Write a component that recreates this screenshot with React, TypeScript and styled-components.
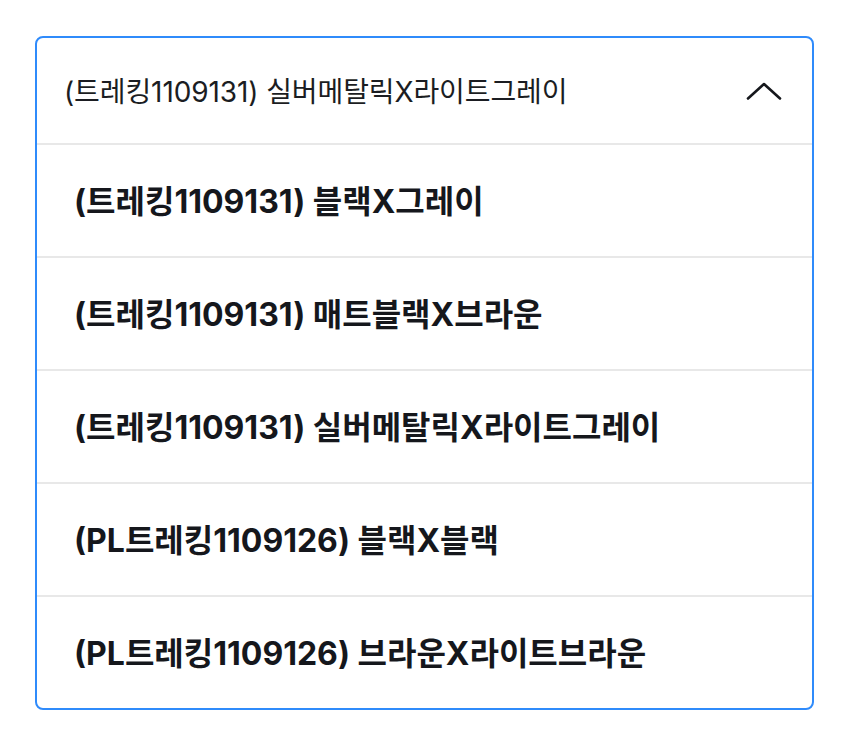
import React from "react";
import styled, { createGlobalStyle } from "styled-components";

const Global = createGlobalStyle`
  html, body { margin: 0; padding: 0; background: #ffffff; }
  body { font-family: Inter, "Noto Sans CJK KR", sans-serif; }
`;

const Page = styled.div`
  padding: 36px 0 0 35px;
`;

const Dropdown = styled.div`
  width: 779px;
  box-sizing: border-box;
  border: 2px solid #2f8bfb;
  border-radius: 8px;
  overflow: hidden;
  display: flex;
  flex-direction: column;
`;

const Header = styled.div`
  height: 103px;
  display: flex;
  align-items: center;
  justify-content: space-between;
  padding: 0 30px 2px 27px;
  border-bottom: 2px solid #e8e8e8;
  box-sizing: content-box;
`;

const HeaderText = styled.span`
  font-size: 28px;
  font-weight: 400;
  color: #1b1d22;
  letter-spacing: -0.1px;
`;

const Item = styled.div<{ $last?: boolean }>`
  height: 107px;
  display: flex;
  align-items: center;
  padding: 0 37px 4px;
  border-bottom: ${(p) => (p.$last ? "none" : "2px solid #e8e8e8")};
  font-size: 32px;
  font-weight: 700;
  color: #15171c;
  letter-spacing: 0;
`;

const ChevronSvg = styled.svg`
  margin-top: 2px;
`;

const Chevron = () => (
  <ChevronSvg width="36" height="20" viewBox="0 0 36 20" fill="none">
    <path d="M2 17.5 L18 3 L34 17.5" stroke="#15171c" strokeWidth="2.6" strokeLinecap="round" strokeLinejoin="round" />
  </ChevronSvg>
);

const options = [
  "(트레킹1109131) 블랙X그레이",
  "(트레킹1109131) 매트블랙X브라운",
  "(트레킹1109131) 실버메탈릭X라이트그레이",
  "(PL트레킹1109126) 블랙X블랙",
  "(PL트레킹1109126) 브라운X라이트브라운",
];

export default function App() {
  return (
    <>
      <Global />
      <Page>
        <Dropdown>
          <Header>
            <HeaderText>(트레킹1109131) 실버메탈릭X라이트그레이</HeaderText>
            <Chevron />
          </Header>
          {options.map((o, i) => (
            <Item key={o} $last={i === options.length - 1}>
              {o}
            </Item>
          ))}
        </Dropdown>
      </Page>
    </>
  );
}
